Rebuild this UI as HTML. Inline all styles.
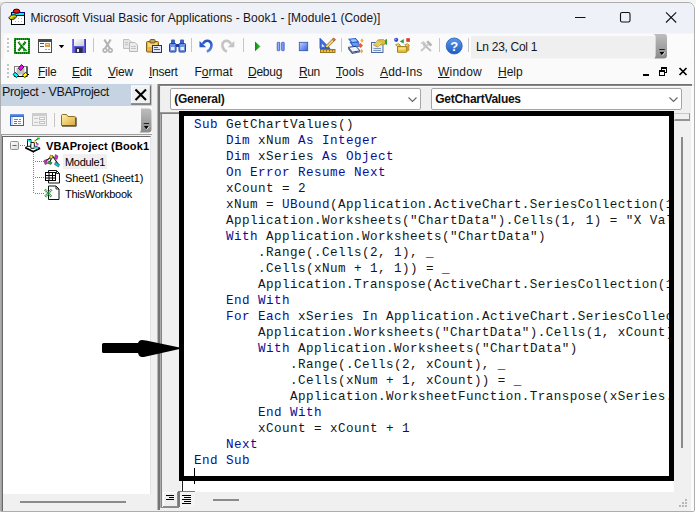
<!DOCTYPE html>
<html>
<head>
<meta charset="utf-8">
<style>
html,body{margin:0;padding:0;}
body{width:699px;height:515px;background:#ffffff;position:relative;overflow:hidden;font-family:"Liberation Sans",sans-serif;color:#000;}
div,svg{position:absolute;box-sizing:border-box;}
svg{overflow:visible;}
.tx{white-space:nowrap;line-height:14px;font-size:12px;color:#161616;}
#win{left:0;top:2px;width:695px;height:510px;background:#f0f0f0;border:1px solid #adadad;border-radius:6px 7px 2px 1px;overflow:hidden;}
#inner{left:-1px;top:-3px;width:699px;height:515px;}
#title{left:0;top:3px;width:699px;height:30px;background:#eff1f9;}
#toolbar{left:0;top:33px;width:699px;height:26px;background:#f5f5f5;}
#menubar{left:0;top:59px;width:699px;height:25px;background:#fafafa;}
.mi{letter-spacing:-0.25px;}
.mi u{text-decoration:underline;text-underline-offset:1px;text-decoration-thickness:1px;}
.sep{width:1px;top:38px;height:14px;background:#c6c6c6;}
#projhead{left:1px;top:84px;width:151px;height:22px;background:#c6d3e3;}
#projtb{left:1px;top:106px;width:151px;height:29px;background:#f8f8f8;}
#tree{left:2px;top:136px;width:149px;height:358px;background:#fff;border-top:1px solid #696969;border-left:1px solid #696969;border-right:1px solid #e3e3e3;overflow:hidden;}
#tree .tx{font-size:11px;line-height:13px;color:#000;}
.dd{top:88px;height:22px;background:#fff;border:1px solid #a6a6a6;border-radius:2px;}
.dd .tx{left:3.3px;top:3px;font-weight:bold;color:#111;letter-spacing:-0.28px;}
#codebg{left:163px;top:112px;width:511px;height:380px;background:#fff;}
#margin{left:163px;top:113px;width:18px;height:379px;background:#f0f0f0;}
#code{left:179px;top:111px;width:495px;height:370px;border:5px solid #000;overflow:hidden;background:#fff;}
pre{margin:0;position:absolute;left:10px;top:1px;font-family:"Liberation Mono",monospace;font-size:12.6px;letter-spacing:0.439px;line-height:16px;color:#161616;}
.k{color:#0c0c92;}
</style>
</head>
<body>
<div style="left:0;top:0;width:696px;height:4px;background:#f4f4f4;"></div>
<div style="left:0;top:2px;width:6px;height:10px;background:linear-gradient(#e4e4e4,#c8c8c8);"></div>
<div id="win"><div id="inner">
  <div id="title">
    <div class="tx" style="left:30.500px;top:8px;">Microsoft Visual Basic for Applications - Book1 - [Module1 (Code)]</div>
    <svg style="left:0px;top:-3px" width="699" height="515">
<g shape-rendering="crispEdges">
<rect x="11" y="12" width="14" height="13" fill="#000"/>
<rect x="12" y="13" width="12" height="11" fill="#fff"/>
<rect x="11" y="12" width="14" height="1" fill="#00008b"/>
<rect x="12" y="13" width="12" height="2" fill="#00f0f0"/>
<rect x="12" y="15" width="12" height="1" fill="#000"/>
<rect x="18" y="18" width="1" height="1" fill="#b0b0b0"/><rect x="21" y="18" width="1" height="1" fill="#b0b0b0"/>
<rect x="15" y="21" width="1" height="1" fill="#b0b0b0"/><rect x="18" y="21" width="1" height="1" fill="#b0b0b0"/><rect x="21" y="21" width="1" height="1" fill="#b0b0b0"/>
</g>
<ellipse cx="16.5" cy="11.2" rx="3.3" ry="2.1" fill="#f01010" stroke="#000" stroke-width="0.9"/>
<path d="M8.800,17.800 L11.500,15 L15.600,14.800 L16.800,16.700 L14,19.200 L10,19.400 Z" fill="#e8e000" stroke="#000" stroke-width="0.9"/>
<path d="M12.200,17.800 L15.600,16.200 L15.800,17.400 L13.400,18.800 Z" fill="#808000"/>
</svg>
    <svg style="left:0px;top:-3px" width="699" height="515">
<path d="M575,17.5 H585.5" stroke="#111" stroke-width="1.1"/>
<rect x="620.5" y="12.5" width="9.5" height="9.5" rx="1.6" fill="none" stroke="#111" stroke-width="1.1"/>
<path d="M666,12.3 L676.2,22.5 M676.2,12.3 L666,22.5" stroke="#111" stroke-width="1.1"/>
</svg>
  </div>
  <div id="toolbar">
    <div style="left:4px;top:1px;width:690px;height:25px;background:#fbfbfb;border-radius:3px 0 0 0;"></div>
    <svg style="left:0px;top:-33px" width="699" height="515">
<g shape-rendering="crispEdges" fill="#c4c4c4">
<rect x="7" y="38" width="2" height="2"/><rect x="7" y="42" width="2" height="2"/><rect x="7" y="46" width="2" height="2"/><rect x="7" y="50" width="2" height="2"/>
</g>
<!-- excel -->
<rect x="15" y="39" width="14" height="14" fill="#fff" stroke="#2c9a2c" stroke-width="2"/>
<rect x="15" y="39" width="14" height="14" fill="none" stroke="#007200" stroke-width="2" stroke-dasharray="1,1"/>
<path d="M18.500,42 L25.500,50.500 M25.500,42 L18.500,50.500" stroke="#2c9a2c" stroke-width="2.100"/>
<path d="M18.500,42 L25.500,50.500 M25.500,42 L18.500,50.500" stroke="#007200" stroke-width="2.100" stroke-dasharray="1,1"/>
<path d="M19,41.500 L27,50" stroke="#f4fff4" stroke-width="0.800"/>
<path d="M23,50.500 H27" stroke="#2c9a2c" stroke-width="1.500"/>
<!-- userform -->
<g shape-rendering="crispEdges">
<rect x="38" y="39" width="14" height="14" fill="#4a4a4a"/>
<rect x="39" y="42" width="12" height="10" fill="#fff"/>
<rect x="40" y="43" width="4" height="1" fill="#555"/><rect x="40" y="46" width="4" height="1" fill="#555"/>
<rect x="45" y="43" width="5" height="4" fill="#e79a30"/><rect x="46" y="44" width="3" height="1" fill="#f8d8a0"/>
<rect x="45" y="49" width="2" height="1" fill="#e79a30"/><rect x="48" y="49" width="2" height="1" fill="#e79a30"/>
</g>
<path d="M58.8,45 H64.2 L61.5,48.2 Z" fill="#000"/>
<!-- save -->
<g shape-rendering="crispEdges">
<rect x="72" y="39" width="14" height="14" fill="#5f5cd6"/>
<rect x="72" y="39" width="1" height="14" fill="#7d7be0"/>
<rect x="85" y="39" width="1" height="14" fill="#3b3aa0"/>
<rect x="74" y="39" width="10" height="7" fill="#f4f4fa"/>
<rect x="75" y="47" width="8" height="6" fill="#3a3a88"/>
<rect x="76" y="48" width="6" height="5" fill="#2a2a48"/>
<rect x="77" y="49" width="2" height="3" fill="#e8e8f0"/>
</g>
<rect x="74" y="39" width="10" height="7" fill="url(#gsv)"/>

<rect class="s" x="93" y="38" width="1" height="14" fill="#c6c6c6"/>
<!-- cut -->
<path d="M104.300,39.500 L109.800,48.200 M110.700,39.500 L105.200,48.200" stroke="#b2b2b2" stroke-width="2.100" fill="none"/>
<circle cx="105" cy="50.300" r="1.900" fill="#f0f0f0" stroke="#b2b2b2" stroke-width="1.500"/>
<circle cx="110.300" cy="50.300" r="1.900" fill="#f0f0f0" stroke="#b2b2b2" stroke-width="1.500"/>
<!-- copy -->
<path d="M123.500,39.500 H129 L131.500,42 V48.500 H123.500 Z" fill="#e6e6e6" stroke="#c0c0c0"/>
<path d="M129.500,42.500 H135 L137.500,45 V51.500 H129.500 Z" fill="#ececec" stroke="#b8b8b8"/>
<path d="M125,42.500 H128 M125,44.500 H128 M131,46.500 H136 M131,48.500 H136" stroke="#c4c4c4"/>
<!-- paste -->
<rect x="146.5" y="41.500" width="12" height="10.500" rx="1" fill="#f0b432" stroke="#7c5c20"/>
<rect x="148" y="43" width="9" height="4" fill="#f8d878"/>
<rect x="150" y="39.500" width="5" height="3.500" rx="1" fill="#c8a050" stroke="#6a5020" stroke-width="0.9"/>
<rect x="152.500" y="45.500" width="9" height="7" fill="#dfe8f8" stroke="#33333f"/>
<path d="M154,47.5 H158 M154,49.5 H160" stroke="#3b64c0"/>
<!-- find -->
<rect x="171" y="39.500" width="4" height="5" rx="1" fill="#3a62c4"/><rect x="180" y="39.500" width="4" height="5" rx="1" fill="#3a62c4"/>
<rect x="169.500" y="43.500" width="6.500" height="8.500" rx="1" fill="#6e92e6" stroke="#1f3f9a"/>
<rect x="179" y="43.500" width="6.500" height="8.500" rx="1" fill="#6e92e6" stroke="#1f3f9a"/>
<rect x="176" y="44" width="3" height="3" fill="#1f3f9a"/>
<rect x="171" y="47" width="3.500" height="3" fill="#e6eefc"/><rect x="180.500" y="47" width="3.500" height="3" fill="#e6eefc"/>
<rect x="191" y="38" width="1" height="14" fill="#c6c6c6"/>
<!-- undo -->
<path d="M202.800,44 Q205,39.800 208.800,41 Q212.300,42.600 211.200,47 Q210,50.600 206.800,51.600" fill="none" stroke="url(#gun)" stroke-width="2.500"/>
<path d="M199.500,41 V47.200 H206.200 Z" fill="#2a5ac6"/>
<!-- redo -->
<path d="M231,44 Q228.800,39.800 225,41 Q221.500,42.600 222.600,47 Q223.800,50.600 227,51.600" fill="none" stroke="#c4c4c4" stroke-width="2.500"/>
<path d="M234.300,41 V47.200 H227.600 Z" fill="#c4c4c4"/>
<rect x="243" y="38" width="1" height="14" fill="#c6c6c6"/>
<!-- run pause stop -->
<path d="M255,41.600 L260.500,46.400 L255,51.200 Z" fill="url(#grn)"/>
<rect x="277.200" y="42.300" width="2.600" height="8.400" rx="0.600" fill="url(#gps)" stroke="#2c56c8" stroke-width="0.700"/><rect x="281.600" y="42.300" width="2.600" height="8.400" rx="0.600" fill="url(#gps)" stroke="#2c56c8" stroke-width="0.700"/>
<rect x="299.300" y="42.300" width="8.400" height="8.400" fill="url(#gst)" stroke="#2c52c0" stroke-width="0.800"/>
<!-- design mode -->
<path d="M320,38.300 V48.500 H330 Z" fill="#3f6ee0" stroke="#2a52c0" stroke-width="0.900"/>
<path d="M321.800,43.800 V46.800 H324.800 Z" fill="#f4f6fc"/>
<path d="M333.600,38 L335.400,39.800 L327.600,47.600 L325.200,48.200 L325.800,45.800 Z" fill="#f0d468" stroke="#7a5c1c" stroke-width="0.700"/>
<path d="M333.600,38 L335.400,39.800 L334,41.200 L332.200,39.400 Z" fill="#e07878" stroke="#8a3a3a" stroke-width="0.500"/>
<path d="M325.200,48.200 L325.600,46.600 L326.800,47.800 Z" fill="#333"/>
<rect x="320.500" y="49.500" width="14.500" height="3" fill="#f0c030" stroke="#8a6a18" stroke-width="0.900"/>
<path d="M323.500,50 V51.500 M326.500,50 V51.500 M329.500,50 V51.500 M332.500,50 V51.500" stroke="#6a5010" stroke-width="0.800"/>
<rect x="341" y="38" width="1" height="14" fill="#c6c6c6"/>
<!-- project explorer -->
<path d="M349,39.200 L355.500,38.500 L358.500,42 L352,42.700 Z" fill="#a8c8f8" stroke="#2a62d0" stroke-width="1.100"/>
<path d="M350.500,42.600 L357.500,42 L360.500,46 L353.500,46.600 Z" fill="#6a9cf0" stroke="#2a62d0" stroke-width="1.100"/>
<path d="M348.300,47.300 L356,46.300 L360,50.800 L352.300,52.200 Z" fill="#f2f5fc" stroke="#1f3f8a" stroke-width="1"/>
<path d="M348.300,48.300 L352.300,53.300 L360,51.800" fill="none" stroke="#4a5a7a" stroke-width="1.100"/>
<path d="M362,38.300 L363.600,40.500 L362,42.700 L360.400,40.500 Z" fill="#f4a83a"/>
<path d="M360.500,43 L363,45.500 L360.500,48 L358,45.500 Z" fill="#f05a30"/>
<path d="M361.600,49 L363.200,51.200 L361.600,53.400 L360,51.200 Z" fill="#f4a83a"/>
<!-- properties -->
<rect x="371.500" y="42.500" width="11.500" height="10" fill="#e6eefa" stroke="#4a6aa8"/>
<path d="M373.500,48.500 H381 M373.500,50.500 H381" stroke="#7a94c4"/>
<path d="M373.500,45 L378,39.800 L383.500,39.500 L386,42 L384.500,44.500 L380,45 L377.500,47 Z" fill="#dcbc3c" stroke="#9a8428" stroke-width="0.600"/>
<path d="M374.500,45 L378,41 M376.500,45.500 L379.500,42 M378,46 L381,42.500" stroke="#f8f0c0" stroke-width="0.700"/>
<path d="M385,39.800 L387,39 V45 L385,44 Z" fill="#30a040"/>
<!-- object browser -->
<path d="M397.500,46.500 H406.500 V52.300 H397.500 Z" fill="#ecc43a" stroke="#9a7a1c" stroke-width="0.900"/>
<path d="M398.500,47.500 H405.500 V49.500 H398.500 Z" fill="#f8e488"/>
<path d="M397.500,46.500 L395.500,44.800 L398.500,43.600 L400.500,45.400 Z" fill="#f4d860" stroke="#9a7a1c" stroke-width="0.700"/>
<path d="M406.500,46.500 L409.500,45.600 L407.800,43.800 L404.800,44.600 Z" fill="#f4d860" stroke="#9a7a1c" stroke-width="0.700"/>
<path d="M406.500,46.500 L409.300,45.600 V50.600 L406.500,52.300 Z" fill="#c89c28"/>
<circle cx="396.200" cy="39.800" r="2.100" fill="#3a48c8"/><circle cx="395.700" cy="39.300" r="0.800" fill="#a8b0f0"/>
<path d="M399.700,41.400 L403.800,39 V43.500 Z" fill="#2aa03a"/>
<rect x="406.300" y="38.200" width="3.600" height="3.600" fill="#e03828"/>
<!-- toolbox gray -->
<path d="M423.300,44 L431,51" stroke="#bdbdbd" stroke-width="1.800"/>
<path d="M423.600,41.200 Q421,41.600 420.600,44.200 L422.600,43.400 L423.800,44.600 L423,46.600 Q425.800,46 425.800,43.400" fill="#c4c4c4"/>
<path d="M427.800,44.600 L421,51" stroke="#c6c6c6" stroke-width="1.800"/>
<path d="M426.200,42 L428.200,40.400 L432.200,44.400 L431,46.200 L429.400,46 Z" fill="#b6b6b6"/>
<rect x="439" y="38" width="1" height="14" fill="#c6c6c6"/>
<!-- help -->
<circle cx="454.200" cy="46" r="8" fill="url(#ghp)" stroke="#2a5cb8" stroke-width="0.8"/>
<text x="454.200" y="50.600" font-family="Liberation Sans" font-weight="bold" font-size="13" fill="#fff" text-anchor="middle">?</text>
<rect x="468" y="38" width="1" height="14" fill="#c6c6c6"/>
<!-- Ln field -->
<path d="M471,36 H653 Q655.500,36 655.500,38.500 V56 Q655.500,58.500 653,58.500 H471 Z" fill="#efefef"/>
<path d="M655.600,34 H664 Q667,34 667,37 V55.500 Q667,58.500 664,58.500 H653.500 Q655.600,58 655.600,55.500 V37 Q655.600,34.500 653.500,34 Z" fill="url(#gof)"/>
<rect x="659.300" y="49.200" width="5.400" height="1.300" fill="#000"/><rect x="659.300" y="50.500" width="5.400" height="0.900" fill="#f4f4f4"/>
<path d="M659.300,51.800 H664.700 L662,55.200 Z" fill="#000"/>
<path d="M664.900,52.200 L662.300,55.500" stroke="#f4f4f4" stroke-width="0.9"/>
<defs>
<linearGradient id="gun" x1="0" y1="0" x2="0" y2="1"><stop offset="0" stop-color="#2452c0"/><stop offset="1" stop-color="#5a8ae8"/></linearGradient>
<linearGradient id="grn" x1="0" y1="0" x2="1" y2="0"><stop offset="0" stop-color="#0a8a0a"/><stop offset="1" stop-color="#3cc83c"/></linearGradient>
<linearGradient id="gsv" x1="0" y1="0" x2="1" y2="1"><stop offset="0" stop-color="#fff"/><stop offset="1" stop-color="#c8c8d8"/></linearGradient>
<linearGradient id="gst" x1="0" y1="0" x2="1" y2="1"><stop offset="0" stop-color="#c4d4fc"/><stop offset="1" stop-color="#3a62d8"/></linearGradient>
<linearGradient id="gps" x1="0" y1="0" x2="1" y2="0"><stop offset="0" stop-color="#5a84ec"/><stop offset="0.5" stop-color="#98b2f8"/><stop offset="1" stop-color="#4a74e4"/></linearGradient>
<linearGradient id="ghp" x1="0" y1="0" x2="0" y2="1"><stop offset="0" stop-color="#5a98ec"/><stop offset="1" stop-color="#1f5cc4"/></linearGradient>
<linearGradient id="gof" x1="0" y1="0" x2="0" y2="1"><stop offset="0" stop-color="#bdbdbd"/><stop offset="1" stop-color="#8a8a8a"/></linearGradient>
</defs>
</svg><div class="tx" style="left:476px;top:7px;letter-spacing:-0.3px;">Ln 23, Col 1</div>
  </div>
  <div id="menubar">
    <svg style="left:0px;top:-59px" width="699" height="515">
<g shape-rendering="crispEdges" fill="#c4c4c4">
<rect x="7" y="64" width="2" height="2"/><rect x="7" y="68" width="2" height="2"/><rect x="7" y="72" width="2" height="2"/><rect x="7" y="76" width="2" height="2"/>
</g>
<rect x="14.500" y="66.500" width="12.500" height="10" fill="#fff" stroke="#808080"/>
<path d="M27,66.500 V76.500 H14.500" fill="none" stroke="#000"/>
<rect x="16.500" y="68" width="8" height="6.500" fill="#c0c0c0"/>
<path d="M21.500,64.600 L24,67 L20.700,70.600 L18.300,68.200 Z" fill="#ff00ff" stroke="#000" stroke-width="0.800"/>
<path d="M15,72.300 L18.500,75.300 L16.500,77.600 L13,74.600 Z" fill="#00ffff" stroke="#000" stroke-width="0.800"/>
<path d="M25.500,72.300 L28,74.600 L24.700,77.600 L22.500,75.300 Z" fill="#ffff00" stroke="#000" stroke-width="0.800"/>
<path d="M27,74.500 H29" stroke="#000"/>
</svg>
    <div class="tx mi" style="left:38px;top:6px"><u>F</u>ile</div>
    <div class="tx mi" style="left:72px;top:6px"><u>E</u>dit</div>
    <div class="tx mi" style="left:108px;top:6px"><u>V</u>iew</div>
    <div class="tx mi" style="left:149px;top:6px"><u>I</u>nsert</div>
    <div class="tx mi" style="left:194.5px;top:6px;letter-spacing:0.0px">F<u>o</u>rmat</div>
    <div class="tx mi" style="left:248px;top:6px"><u>D</u>ebug</div>
    <div class="tx mi" style="left:299px;top:6px;letter-spacing:-0.4px"><u>R</u>un</div>
    <div class="tx mi" style="left:336px;top:6px;letter-spacing:0.0px"><u>T</u>ools</div>
    <div class="tx mi" style="left:380px;top:6px;letter-spacing:0.14px"><u>A</u>dd-Ins</div>
    <div class="tx mi" style="left:438px;top:6px;letter-spacing:0.2px"><u>W</u>indow</div>
    <div class="tx mi" style="left:498px;top:6px;letter-spacing:0.0px"><u>H</u>elp</div>
    <svg style="left:0px;top:-59px" width="699" height="515">
<g shape-rendering="crispEdges" fill="#000">
<rect x="643" y="74" width="6" height="2"/>
<rect x="661" y="67" width="6" height="2"/><rect x="661" y="67" width="1" height="3"/><rect x="666" y="67" width="1" height="6"/><rect x="665" y="72" width="2" height="1"/>
<rect x="659" y="70" width="6" height="2"/><rect x="659" y="70" width="1" height="6"/><rect x="664" y="70" width="1" height="6"/><rect x="659" y="75" width="6" height="1"/>
</g>
<path d="M679.500,68 L686.500,75 M686.500,68 L679.500,75" stroke="#000" stroke-width="1.700"/>
</svg>
  </div>
  <!-- separator line under menubar -->
  <div id="projhead"><div class="tx" style="left:1px;top:1px;font-size:12.5px;line-height:15px;letter-spacing:-0.35px;">Project - VBAProject</div>
    <svg style="left:-1px;top:-84px" width="699" height="515">
<rect x="131" y="85.500" width="19.500" height="18.500" fill="#f1f1f1"/>
<path d="M131.500,104 V86 H150" fill="none" stroke="#fff"/>
<path d="M131,104 H150.500 V85.500" fill="none" stroke="#6e6e6e" stroke-width="1.300"/>
<path d="M135.500,89.500 L146,100 M146,89.500 L135.500,100" stroke="#000" stroke-width="2.100"/>
</svg>
  </div>
  <div id="projtb">
    <svg style="left:-1px;top:-106px" width="699" height="515">
<!-- view code -->
<rect x="10.500" y="114.500" width="13" height="11" fill="#fff" stroke="#2f5fc0"/>
<rect x="10" y="114" width="14" height="3" fill="url(#gvc)"/>
<rect x="11" y="117" width="2" height="8" fill="#c8d6f0"/>
<path d="M14,119.500 H18 M19,119.500 H21" stroke="#f06030"/>
<path d="M14,121.500 H17" stroke="#4a78d8"/><path d="M18,121.500 H21" stroke="#f06030"/>
<path d="M14,123.500 H17" stroke="#4a78d8"/><path d="M18,123.500 H21" stroke="#f08050"/>
<!-- view object gray -->
<rect x="32.500" y="113.500" width="14" height="12" fill="#f0f0f0" stroke="#c4c4c4"/>
<rect x="32" y="113" width="15" height="3" fill="#cdcdcd"/>
<path d="M34,118.500 H38 M34,122.500 H38" stroke="#c8c8c8"/>
<rect x="39.500" y="117.500" width="5" height="2" fill="#fafafa" stroke="#c4c4c4"/>
<rect x="39.500" y="121.500" width="5" height="2" fill="#fafafa" stroke="#c4c4c4"/>
<rect x="54" y="113" width="1" height="14" fill="#c6c6c6"/>
<!-- folder -->
<path d="M61.500,125.500 V115.500 Q61.500,114.500 62.500,114.500 H66.500 L68,116.500 H74.500 Q75.500,116.500 75.500,117.500 V125.500 Z" fill="url(#gfd)" stroke="#8a6e28"/>
<path d="M76.200,117.500 V126.200 H62" fill="none" stroke="#3a3018" stroke-width="0.9"/>
<!-- overflow -->
<path d="M141,108.500 H148.500 Q151.500,108.500 151.500,111.500 V129.500 Q151.500,132.500 148.500,132.500 H139 Q141,132 141,129.500 Z" fill="url(#gof2)"/>
<rect x="143.700" y="123.200" width="5.400" height="1.300" fill="#000"/><rect x="143.700" y="124.500" width="5.400" height="0.900" fill="#f4f4f4"/>
<path d="M143.700,125.800 H149.100 L146.400,129.200 Z" fill="#000"/>
<path d="M149.300,126.200 L146.700,129.500" stroke="#f4f4f4" stroke-width="0.9"/>
<defs>
<linearGradient id="gvc" x1="0" y1="0" x2="0" y2="1"><stop offset="0" stop-color="#7aa2f0"/><stop offset="1" stop-color="#2f5fc0"/></linearGradient>
<linearGradient id="gfd" x1="0" y1="0" x2="1" y2="1"><stop offset="0" stop-color="#fff2b0"/><stop offset="1" stop-color="#dca838"/></linearGradient>
<linearGradient id="gof2" x1="0" y1="0" x2="0" y2="1"><stop offset="0" stop-color="#bdbdbd"/><stop offset="1" stop-color="#8a8a8a"/></linearGradient>
</defs>
</svg>
  </div>
  <div style="left:1px;top:134px;width:151px;height:1px;background:#a0a0a0;"></div>
  <div style="left:1px;top:134px;width:1px;height:377px;background:#a0a0a0;"></div>
  <div id="tree">
    <svg style="left:-3px;top:-137px" width="699" height="515">
<!-- dotted lines -->
<path d="M20,145.500 H26" stroke="#808080" stroke-dasharray="1,1" shape-rendering="crispEdges"/>
<path d="M33.500,152 V194" stroke="#808080" stroke-dasharray="1,1" shape-rendering="crispEdges"/>
<path d="M35,161.500 H44 M35,177.500 H45 M35,193.500 H44" stroke="#808080" stroke-dasharray="1,1" shape-rendering="crispEdges"/>
<!-- expand box -->
<rect x="10.500" y="141.500" width="8" height="8" rx="1" fill="url(#gex)" stroke="#919191"/>
<path d="M12.500,145.500 H16.500" stroke="#4b63a7"/>
<!-- project icon -->
<path d="M25.500,147.300 L31,144.500 L40,148 L33.200,151.300 Z" fill="#fff" stroke="#000" stroke-width="0.800"/>
<path d="M25.300,147.800 L33.200,151.600 L40.200,148.400" fill="none" stroke="#000" stroke-width="1.500"/>
<path d="M27.500,139.500 H31 V146.300 H27.500 Z" fill="#fff" stroke="#000" stroke-width="0.900"/>
<path d="M30.800,142.500 H34.300 V148.300 H30.800 Z" fill="#fff" stroke="#000" stroke-width="0.900"/>
<path d="M27.800,140 L31.400,141.800" stroke="#00e0f0" stroke-width="1.600"/>
<path d="M30,143.200 L32,144.300" stroke="#00e0f0" stroke-width="1.500"/>
<path d="M34.200,147.300 L38,148.500" stroke="#00e0f0" stroke-width="1.500"/>
<path d="M34.500,141 L38,138.800 M36,142 L37.200,144" stroke="#000" stroke-width="0.900"/>
<rect x="33.800" y="140.600" width="2.400" height="1.800" fill="#f0f000"/>
<rect x="37" y="137.600" width="2.800" height="1.800" fill="#00d020"/>
<rect x="36.400" y="143.200" width="2" height="2.200" fill="#f020e0"/>
<!-- module icon -->
<path d="M45,161.500 L52.500,156 L58.500,164.500 M52.500,156 L49.500,162.500" stroke="#111" stroke-width="1.100" fill="none"/>
<path d="M50.500,155 L53,156.500 L52,159 L49.500,157.500 Z" fill="#e8e000" stroke="#333" stroke-width="0.5"/>
<path d="M55.500,154.500 L58,156 L57,159.500 L54.500,158 Z" fill="#e020d0" stroke="#333" stroke-width="0.500"/>
<path d="M44,160.500 L46.500,159.500 L47.500,163.500 L45,164.500 Z" fill="#e020d0" stroke="#333" stroke-width="0.500"/>
<path d="M48.500,161 L52,162.500 L51,164.500 L48,163.500 Z" fill="#20b030" stroke="#333" stroke-width="0.500"/>
<path d="M55.500,162 L59.500,164.500 L58.500,167 L54.500,164.500 Z" fill="#00c8d8" stroke="#333" stroke-width="0.500"/>
<!-- sheet icon -->
<path d="M48.500,170.500 H56.500 L59.500,173.500 V183 H48.500 Z" fill="#fff" stroke="#111" stroke-width="1"/>
<path d="M56.500,170.500 V173.500 H59.500" fill="none" stroke="#111" stroke-width="0.9"/>
<rect x="45.500" y="172.500" width="10" height="8" fill="#fff" stroke="#000"/>
<path d="M45.500,175.500 H55.500 M45.500,178 H55.500 M49,172.500 V180.500 M52.500,172.500 V180.500" stroke="#000" stroke-width="1"/>
<!-- thisworkbook icon -->
<path d="M48.500,186 H56 L59,189 V199.500 H48.500 Z" fill="#fff" stroke="#111" stroke-width="1"/>
<path d="M56,186 V189 H59" fill="none" stroke="#111" stroke-width="0.9"/>
<path d="M45,189.500 L51.500,197 M51.500,189.500 L45,197" stroke="#2c8a3c" stroke-width="2.600" stroke-dasharray="1,0.700"/>
<defs><linearGradient id="gex" x1="0" y1="0" x2="1" y2="1"><stop offset="0" stop-color="#fff"/><stop offset="1" stop-color="#d8d8d8"/></linearGradient></defs>
</svg>
    <div class="tx" style="left:43px;top:3px;font-weight:bold;letter-spacing:0.14px;">VBAProject (Book1</div>
    <div style="left:60px;top:17px;width:44px;height:15px;background:#f0f0f0;"></div>
    <div class="tx" style="left:62px;top:19px;letter-spacing:-0.3px;">Module1</div>
    <div class="tx" style="left:62px;top:35px;letter-spacing:-0.12px;">Sheet1 (Sheet1)</div>
    <div class="tx" style="left:62px;top:51px;letter-spacing:-0.25px;">ThisWorkbook</div>
  </div>
  <!-- tree h scrollbar -->
  <div style="left:2px;top:494px;width:149px;height:17px;background:#f0f0f0;border-left:1px solid #696969;"></div>
  <div style="left:20px;top:501px;width:106px;height:2px;background:#8b8b8b;"></div>
  <!-- splitter -->
  <div style="left:157px;top:84px;width:4px;height:426px;background:linear-gradient(90deg,#e0e0e0,#8a8a8a 25%,#6c6c6c 45%,#747474 65%,#e8e8e8 85%,#fafafa);"></div>
  <div style="left:160px;top:112px;width:2px;height:396px;background:linear-gradient(90deg,#d8d8d8,#888 45%,#808080);"></div>
  
  <div style="left:158px;top:84px;width:534px;height:2px;background:linear-gradient(#6a6a6a,#8e8e8e);"></div>
  <div style="left:161px;top:86px;width:533px;height:1px;background:#fafafa;"></div>
  <!-- code window -->
  <div class="dd" style="left:170px;width:251px;"><div class="tx">(General)</div>
    <svg style="left:237px;top:8px" width="10" height="6"><path d="M0.5,0.5 L4.5,4.5 L8.5,0.5" fill="none" stroke="#666" stroke-width="1.1"/></svg>
  </div>
  <div class="dd" style="left:431px;width:251px;"><div class="tx">GetChartValues</div>
    <svg style="left:237px;top:8px" width="10" height="6"><path d="M0.5,0.5 L4.5,4.5 L8.5,0.5" fill="none" stroke="#666" stroke-width="1.1"/></svg>
  </div>
  <div id="codebg"></div>
  <div id="margin"></div>
  <div style="left:160px;top:112px;width:20px;height:2px;background:linear-gradient(#a8a8a8,#707070);"></div>
  <div style="left:182px;top:481px;width:1px;height:11px;background:#222;"></div>
  <div id="code"><pre><span class="k">Sub</span> GetChartValues()
    <span class="k">Dim</span> xNum <span class="k">As Integer</span>
    <span class="k">Dim</span> xSeries <span class="k">As Object</span>
    <span class="k">On Error Resume Next</span>
    xCount = 2
    xNum = <span class="k">UBound</span>(Application.ActiveChart.SeriesCollection(1).Values)
    Application.Worksheets("ChartData").Cells(1, 1) = "X Values"
    <span class="k">With</span> Application.Worksheets("ChartData")
        .Range(.Cells(2, 1), _
        .Cells(xNum + 1, 1)) = _
        Application.Transpose(ActiveChart.SeriesCollection(1).XValues)
    <span class="k">End With</span>
    <span class="k">For Each</span> xSeries <span class="k">In</span> Application.ActiveChart.SeriesCollection
        Application.Worksheets("ChartData").Cells(1, xCount) = xSeries.Name
        <span class="k">With</span> Application.Worksheets("ChartData")
            .Range(.Cells(2, xCount), _
            .Cells(xNum + 1, xCount)) = _
            Application.WorksheetFunction.Transpose(xSeries.Values)
        <span class="k">End With</span>
        xCount = xCount + 1
    <span class="k">Next</span>
<span class="k">End Sub</span></pre></div>
  <!-- text cursor -->
  <div style="left:194px;top:468px;width:1px;height:16px;background:#000;"></div>
  <!-- vertical scrollbar -->
  <div style="left:674px;top:112px;width:17px;height:380px;background:#f0f0f0;"></div>
  <div style="left:674px;top:113px;width:16px;height:8px;background:#f0f0f0;border-top:1px solid #c8c8c8;border-left:1px solid #e8e8e8;border-right:1px solid #949494;border-bottom:2px solid #949494;"></div>
  <div style="left:681px;top:137px;width:2px;height:311px;background:#8b8b8b;"></div>
  <!-- bottom bar -->
  <div style="left:163px;top:492px;width:528px;height:16px;background:#f0f0f0;"></div>
  <div style="left:161px;top:507px;width:18px;height:1px;background:#8a8a8a;"></div>
  <div style="left:213px;top:499px;width:26px;height:2px;background:#8b8b8b;"></div>
  <svg style="left:0;top:0" width="699" height="515">
<g shape-rendering="crispEdges">
<rect x="163" y="492" width="15" height="15" fill="#f0f0f0"/>
<rect x="163" y="492" width="15" height="1" fill="#fff"/><rect x="163" y="492" width="1" height="15" fill="#fff"/>
<rect x="177" y="492" width="1" height="15" fill="#8c8c8c"/><rect x="163" y="506" width="15" height="1" fill="#8c8c8c"/>
<rect x="166" y="495" width="8" height="1" fill="#000"/><rect x="169" y="497" width="5" height="1" fill="#000"/><rect x="166" y="499" width="8" height="1" fill="#000"/>
<rect x="178" y="491" width="17" height="16" fill="#f4f4f4"/>
<rect x="178" y="491" width="17" height="1" fill="#7a7a7a"/><rect x="178" y="491" width="2" height="16" fill="#7a7a7a"/>
<rect x="182" y="495" width="9" height="1" fill="#000"/><rect x="184" y="497" width="7" height="1" fill="#000"/><rect x="182" y="499" width="9" height="1" fill="#000"/><rect x="184" y="501" width="7" height="1" fill="#000"/><rect x="182" y="503" width="9" height="1" fill="#000"/>
<g fill="#b8b8b8">
<rect x="685" y="499" width="2" height="2"/><rect x="682" y="502" width="2" height="2"/><rect x="685" y="502" width="2" height="2"/>
<rect x="679" y="505" width="2" height="2"/><rect x="682" y="505" width="2" height="2"/><rect x="685" y="505" width="2" height="2"/>
</g>
</g>
</svg>
  <div style="left:691px;top:86px;width:3px;height:425px;background:#fbfbfb;"></div>
  <div style="left:694px;top:62px;width:1px;height:22px;background:#5a5a5a;"></div>
  <!-- arrow -->
  <svg style="left:0;top:0" width="699" height="515"><path d="M102,344.5 Q102,343 103.5,343 L138,343 Q139,340 142,340 Q144,340 146,340.6 L179.5,347.6 L179.5,349 L146,356.4 Q144,357 142,357 Q139,357 138,353 L103.5,353 Q102,353 102,351.5 Z" fill="#000"/></svg>
</div></div>
</body>
</html>
